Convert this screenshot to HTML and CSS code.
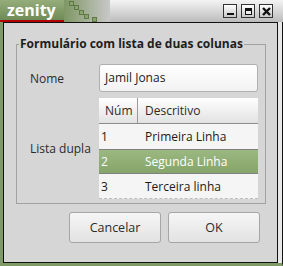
FILE: index.html
```html
<!DOCTYPE html>
<html lang="pt">
<head>
    <meta charset="UTF-8">
    <title>zenity</title>
    <link rel="stylesheet" href="styles.css">
</head>
<body>
    <div class="window">
        <div class="titlebar">
            <div class="tab">zenity</div>
            <div class="checker">
                <span class="sq s1"></span>
                <span class="sq s2"></span>
                <span class="sq s3"></span>
                <span class="sq s4"></span>
                <span class="sq s5"></span>
            </div>
            <div class="bar">
                <div class="wbtn">
                    <svg width="11" height="11" viewBox="0 0 11 11"><rect x="2" y="7" width="7" height="2" fill="#111"/></svg>
                </div>
                <div class="wbtn">
                    <svg width="11" height="11" viewBox="0 0 11 11"><rect x="2" y="2" width="7" height="7" fill="#111"/><rect x="3" y="5" width="5" height="3" fill="#eee"/></svg>
                </div>
                <div class="wbtn">
                    <svg width="11" height="11" viewBox="0 0 11 11"><path d="M2 2 L9 9 M9 2 L2 9" stroke="#111" stroke-width="2.4"/></svg>
                </div>
            </div>
        </div>
        <div class="frame">
            <div class="content">
                <fieldset class="group">
                    <legend>Formulário com lista de duas colunas</legend>
                    <div class="form">
                        <label class="lbl">Nome</label>
                        <div class="entry">Jamil Jonas</div>
                        <label class="lbl">Lista dupla</label>
                        <div class="tree">
                            <div class="thead">
                                <div class="c1">Núm</div>
                                <div class="c2">Descritivo</div>
                            </div>
                            <div class="row">
                                <div class="c1">1</div>
                                <div class="c2">Primeira Linha</div>
                            </div>
                            <div class="row selected">
                                <div class="c1">2</div>
                                <div class="c2">Segunda Linha</div>
                            </div>
                            <div class="row last">
                                <div class="c1">3</div>
                                <div class="c2">Terceira linha</div>
                            </div>
                        </div>
                    </div>
                </fieldset>
                <div class="actions">
                    <button class="btn">Cancelar</button>
                    <button class="btn">OK</button>
                </div>
            </div>
        </div>
    </div>
</body>
</html>
```

FILE: styles.css
```css
* {
    box-sizing: border-box;
    margin: 0;
    padding: 0;
}

body {
    width: 283px;
    height: 266px;
    overflow: hidden;
    font-family: "Open Sans", "Noto Sans", sans-serif;
    font-size: 12px;
    color: #2b2b2b;
    background: #3a3a3a;
}

.window {
    width: 283px;
    height: 266px;
    display: flex;
    flex-direction: column;
}

.titlebar {
    height: 22px;
    display: flex;
    background: linear-gradient(#f4f4f4, #bcbcbc);
}

.tab {
    width: 64px;
    height: 22px;
    padding: 1px 0 0 7px;
    background: linear-gradient(#95ad7b, #6f8b56);
    color: #fff;
    font-weight: bold;
    font-size: 16px;
    line-height: 18px;
    border-bottom: 2px solid #b30000;
}

.checker {
    width: 46px;
    height: 22px;
    position: relative;
    background: linear-gradient(to right, #7e9764, #c8c8c8);
}

.sq {
    position: absolute;
    width: 5px;
    height: 5px;
    background: #8aa36e;
    border: 1px solid #5f7848;
}

.s1 { left: 10px; top: 5px; }
.s2 { left: 15px; top: 10px; }
.s3 { left: 20px; top: 14px; }
.s4 { left: 28px; top: 17px; }
.s5 { left: 5px; top: 1px; }

.bar {
    flex: 1;
    display: flex;
    justify-content: flex-end;
    align-items: center;
    gap: 4px;
    padding-right: 10px;
}

.wbtn {
    width: 14px;
    height: 14px;
    border: 1px solid #333;
    background: linear-gradient(#ffffff, #c8c8c8);
    display: flex;
    align-items: center;
    justify-content: center;
}

.frame {
    flex: 1;
    display: flex;
    border-left: 3px solid #7f9a64;
    border-bottom: 3px solid #7f9a64;
    border-right: 1px solid #111;
    padding-right: 4px;
    background: #e8e8e8;
}

.content {
    flex: 1;
    background: #d6d6d6;
    border: 1px solid #111;
    padding: 13px 11px 0 12px;
    display: flex;
    flex-direction: column;
}

.group {
    border: 1px solid #a2a2a2;
    padding: 12px 6px 0 0;
    height: 168px;
    min-width: 0;
}

.group legend {
    font-weight: bold;
    color: #1e1e1e;
    padding: 0 1px;
    margin-left: 2px;
    line-height: 16px;
    white-space: nowrap;
}

.form {
    display: grid;
    grid-template-columns: 69px 159px;
    row-gap: 6px;
    align-items: center;
    margin-left: 13px;
}

.lbl {
    color: #2b2b2b;
}

.entry {
    height: 28px;
    border: 1px solid #b0b0b0;
    border-radius: 3px;
    background: linear-gradient(#ffffff, #f2f2f2);
    padding: 0 0 0 5px;
    line-height: 26px;
    color: #1a1a1a;
}

.tree {
    background: #f5f5f5;
    height: 101px;
}

.thead {
    display: flex;
    height: 26px;
    background: linear-gradient(#ffffff, #e2e2e2);
    border-bottom: 1px solid #8c8c8c;
    line-height: 25px;
}

.thead .c1 {
    border-right: 1px solid #9a9a9a;
    padding-left: 6px;
}

.c1 {
    width: 39px;
    padding-left: 2px;
}

.c2 {
    padding-left: 7px;
}

.row {
    display: flex;
    height: 25px;
    line-height: 25px;
    color: #1a1a1a;
}

.row.selected {
    background: linear-gradient(#9ab880, #86a56a);
    border-top: 1px solid #808080;
    border-bottom: 1px solid #808080;
    color: #fff;
    line-height: 23px;
}

.row.last {
    border-bottom: 1px dashed #bdbdbd;
}

.actions {
    display: flex;
    justify-content: flex-end;
    gap: 7px;
    padding: 8px 6px 0 0;
}

.btn {
    width: 92px;
    height: 31px;
    border: 1px solid #a6a6a6;
    border-radius: 3px;
    background: linear-gradient(#f6f6f6, #e2e2e2);
    font-family: "Open Sans", "Noto Sans", sans-serif;
    font-size: 12.5px;
    color: #2b2b2b;
}
```
